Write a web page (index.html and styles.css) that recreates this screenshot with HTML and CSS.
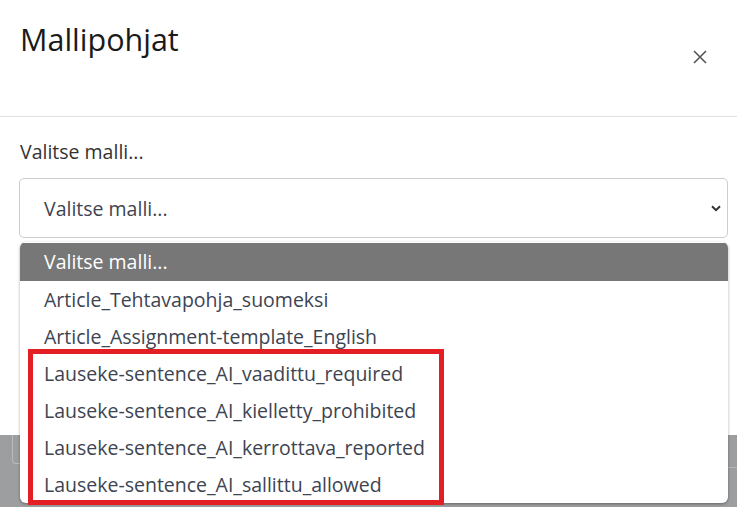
FILE: index.html
```html
<!DOCTYPE html>
<html lang="fi">
<head>
<meta charset="utf-8">
<title>Mallipohjat</title>
<link rel="stylesheet" href="styles.css">
</head>
<body>
<div class="page">
  <div class="modal">
    <div class="modal-header">
      <h2 class="modal-title">Mallipohjat</h2>
      <button class="close" aria-label="Sulje">
        <svg width="14" height="14" viewBox="0 0 14 14"><path d="M1 1 L13 13 M13 1 L1 13" stroke="#555" stroke-width="1.6" fill="none"/></svg>
      </button>
    </div>
    <div class="modal-body">
      <label class="label">Valitse malli...</label>
      <div class="select">
        <span>Valitse malli...</span>
        <svg class="chev" width="10" height="7" viewBox="0 0 10 7"><path d="M1 1.2 L5 5.2 L9 1.2" stroke="#333" stroke-width="2" fill="none"/></svg>
      </div>
    </div>
  </div>
  <div class="backdrop">
    <div class="bg-box"></div>
    <div class="bg-line"></div>
  </div>

  <ul class="dropdown">
    <li class="opt selected">Valitse malli...</li>
    <li class="opt">Article_Tehtavapohja_suomeksi</li>
    <li class="opt">Article_Assignment-template_English</li>
    <li class="opt">Lauseke-sentence_AI_vaadittu_required</li>
    <li class="opt">Lauseke-sentence_AI_kielletty_prohibited</li>
    <li class="opt">Lauseke-sentence_AI_kerrottava_reported</li>
    <li class="opt">Lauseke-sentence_AI_sallittu_allowed</li>
  </ul>
  <div class="highlight"></div>
</div>
</body>
</html>
```

FILE: styles.css
```css
html, body {
  margin: 0;
  padding: 0;
}
body {
  width: 737px;
  height: 507px;
  overflow: hidden;
  font-family: "Open Sans", "Noto Sans", sans-serif;
  background: #9c9ea0;
}
.page {
  position: relative;
  width: 737px;
  height: 507px;
}
.modal {
  background: #fff;
  height: 435px;
}
.modal-header {
  height: 117px;
  box-sizing: border-box;
  border-bottom: 1px solid #dedfe0;
  display: flex;
  justify-content: space-between;
  align-items: flex-start;
  padding: 0 20px;
}
.modal-title {
  margin: 19px 0 0 0;
  font-weight: 400;
  font-size: 30.5px;
  line-height: 40px;
  color: #1a1a1a;
}
.close {
  margin-top: 50px;
  margin-right: 10px;
  background: none;
  border: 0;
  padding: 0;
  width: 14px;
  height: 14px;
  display: flex;
}
.modal-body {
  padding: 23px 9px 0 19px;
}
.label {
  display: block;
  font-size: 19.5px;
  line-height: 24px;
  color: #333;
  margin-left: 1px;
  margin-bottom: 14px;
}
.select {
  height: 60px;
  box-sizing: border-box;
  border: 1px solid #cdcdcd;
  border-radius: 5px;
  display: flex;
  align-items: center;
  justify-content: space-between;
  padding: 0 6px 0 24px;
  font-size: 19.5px;
  color: #3d4452;
}
.chev {
  margin-top: 1px;
}
.backdrop {
  position: relative;
  height: 72px;
}
.bg-box {
  position: absolute;
  left: 12px;
  top: 0;
  width: 20px;
  height: 28px;
  border: 1px solid #b9bbbd;
  border-top: 0;
  border-radius: 0 0 0 4px;
}
.bg-line {
  position: absolute;
  left: 728px;
  right: 0;
  top: 32px;
  height: 1px;
  background: #b4b6b8;
}
.dropdown {
  position: absolute;
  left: 20px;
  top: 242px;
  width: 708px;
  height: 261px;
  margin: 0;
  padding: 1px 0 0 0;
  box-sizing: border-box;
  list-style: none;
  background: #fff;
  border-radius: 6px;
  overflow: hidden;
  box-shadow: 0 1px 3px rgba(0,0,0,0.35);
}
.opt {
  height: 37px;
  line-height: 37px;
  padding-left: 24px;
  font-size: 19.5px;
  color: #3d4452;
  white-space: nowrap;
}
.opt.selected {
  background: #777;
  color: #fff;
  height: 38px;
  line-height: 38px;
}
.highlight {
  position: absolute;
  left: 28px;
  top: 349px;
  width: 416px;
  height: 156px;
  box-sizing: border-box;
  border: 5px solid #e41e25;
}
```
